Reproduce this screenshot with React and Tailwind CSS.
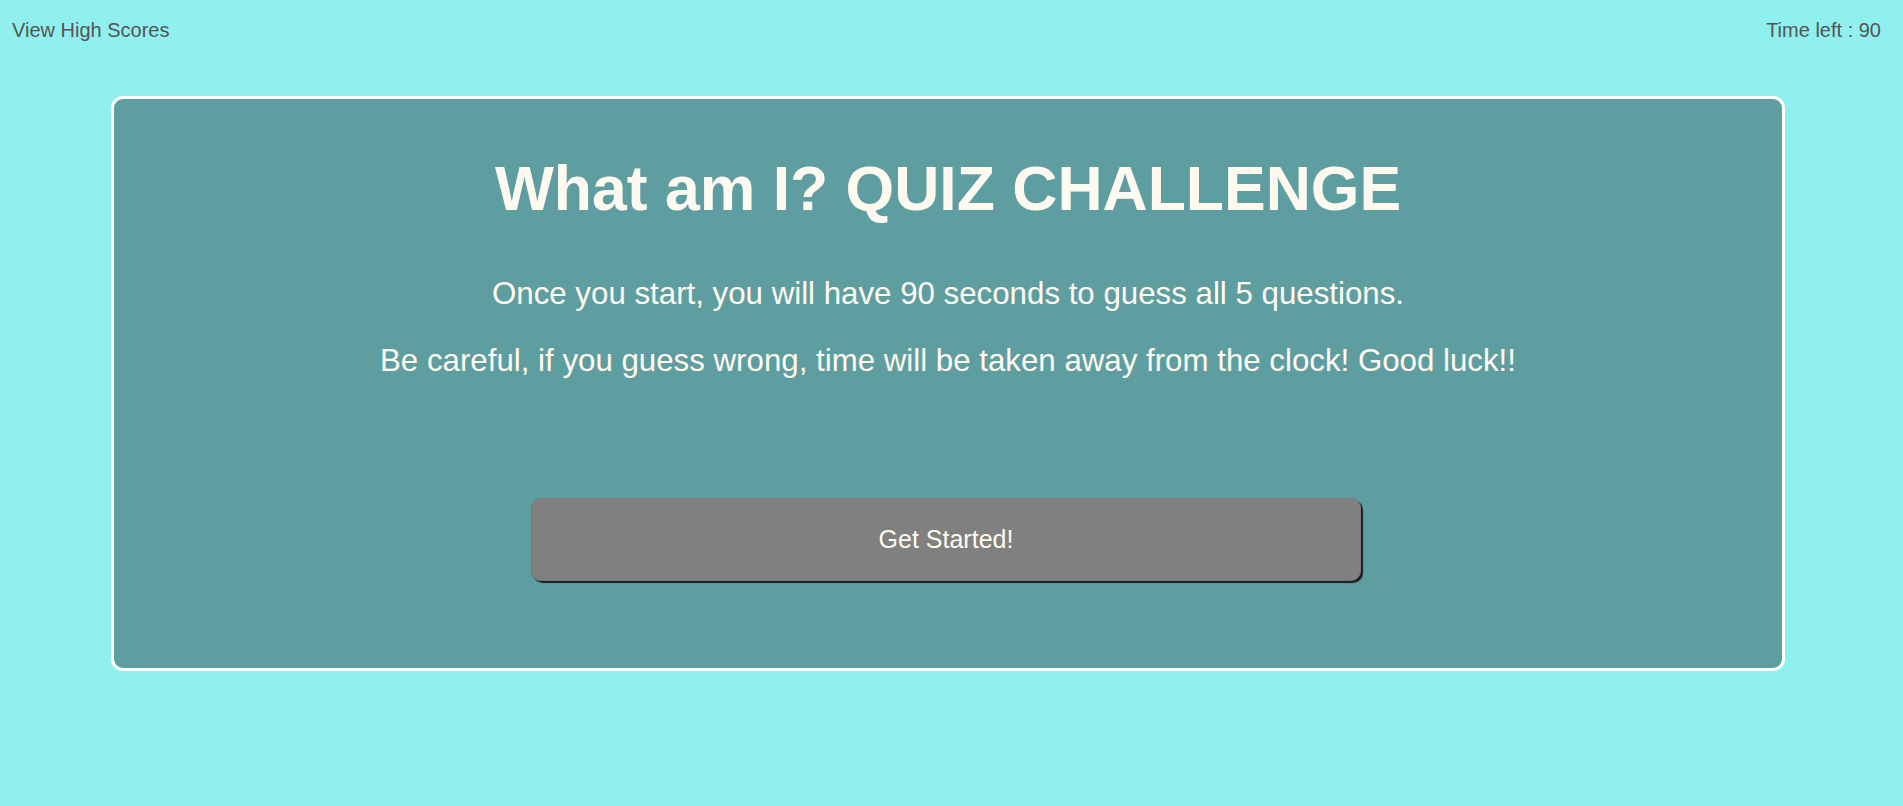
export default function App() {
  return (
    <div
      className="min-h-[806px] w-full bg-[#8ff0ef] text-[#fffaf0]"
      style={{ fontFamily: '"Liberation Sans", Arial, sans-serif' }}
    >
      <header className="flex items-start justify-between pl-[12px] pr-[22px] pt-[20px] text-[20px] leading-none text-[#555555]">
        <a href="#">View High Scores</a>
        <span>Time left : 90</span>
      </header>

      <main className="ml-[111px] mt-[56px] w-[1674px] rounded-[12px] border-[3px] border-white bg-[#5f9ea0] pb-[87px] pt-[58px] text-center">
        <h1 className="text-[62.5px] font-bold leading-none">What am I? QUIZ CHALLENGE</h1>
        <p className="mt-[58px] text-[31.25px] leading-none">
          Once you start, you will have 90 seconds to guess all 5 questions.
        </p>
        <p className="mt-[36px] text-[31.25px] leading-none">
          Be careful, if you guess wrong, time will be taken away from the clock! Good luck!!
        </p>
        <button
          type="button"
          className="ml-[417px] mt-[122px] block h-[83px] w-[830px] rounded-[10px] border border-[#777777] bg-[#808080] text-[25px] text-[#fffaf0] shadow-[2px_2px_1px_#1c1c1c]"
        >
          Get Started!
        </button>
      </main>
    </div>
  );
}
